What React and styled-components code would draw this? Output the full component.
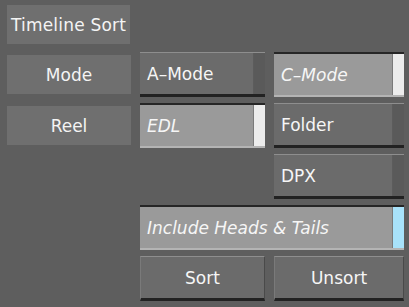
import styled, { createGlobalStyle } from "styled-components";

const GlobalStyle = createGlobalStyle`
  html, body {
    margin: 0;
    padding: 0;
    background: #5e5e5e;
  }
  body {
    width: 409px;
    height: 307px;
    overflow: hidden;
    font-family: "DejaVu Sans", "Liberation Sans", sans-serif;
  }
`;

const Panel = styled.div`
  padding: 5px 0 0 7px;
  display: flex;
  flex-direction: column;
  gap: 8px;
`;

const Title = styled.div`
  width: 123px;
  height: 39px;
  background: #6f6f6f;
  color: #f4f4f4;
  font-size: 17px;
  letter-spacing: 0.2px;
  display: flex;
  align-items: center;
  justify-content: center;
`;

const Grid = styled.div`
  display: grid;
  grid-template-columns: 124px 125px 130px;
  grid-auto-rows: 45px;
  column-gap: 9px;
  row-gap: 6px;
`;

const Label = styled.div`
  grid-column: 1;
  grid-row: ${(p) => p.$row};
  align-self: center;
  height: 39px;
  background: #6f6f6f;
  color: #f4f4f4;
  font-size: 17px;
  display: flex;
  align-items: center;
  justify-content: center;
`;

const Toggle = styled.div`
  grid-column: ${(p) => p.$col} / span ${(p) => p.$span || 1};
  grid-row: ${(p) => p.$row};
  display: flex;
  box-sizing: border-box;
  border-top: ${(p) => (p.$on ? "2px solid #262626" : "1px solid #8e8e8e")};
  border-bottom: ${(p) => (p.$on ? "2px solid #b4b4b4" : "3px solid #222")};
  background: ${(p) => (p.$on ? "#9a9a9a" : "#6b6b6b")};
  color: #f6f6f6;
  font-size: 17px;
  font-style: ${(p) => (p.$on ? "italic" : "normal")};
`;

const ToggleText = styled.div`
  flex: 1;
  display: flex;
  align-items: center;
  padding-left: 7px;
  white-space: nowrap;
`;

const Strip = styled.div`
  width: 11px;
  background: ${(p) => p.$color};
  border-left: 1px solid ${(p) => (p.$on ? "#7a7a7a" : "#5c5c5c")};
`;

const Action = styled.div`
  grid-row: 5;
  grid-column: ${(p) => p.$col};
  box-sizing: border-box;
  border-top: 1px solid #8e8e8e;
  border-left: 1px solid #7a7a7a;
  border-right: 1px solid #4a4a4a;
  border-bottom: 3px solid #222;
  background: #6b6b6b;
  color: #f6f6f6;
  font-size: 17px;
  display: flex;
  align-items: center;
  justify-content: center;
`;

function ToggleButton({ col, row, span, on, strip, children }) {
  const color = strip || (on ? "#ececec" : "#5a5a5a");
  return (
    <Toggle $col={col} $row={row} $span={span} $on={on}>
      <ToggleText>{children}</ToggleText>
      <Strip $color={color} $on={on} />
    </Toggle>
  );
}

export default function App() {
  return (
    <>
      <GlobalStyle />
      <Panel>
        <Title>Timeline Sort</Title>
        <Grid>
          <Label $row={1}>Mode</Label>
          <Label $row={2}>Reel</Label>
          <ToggleButton col={2} row={1}>A–Mode</ToggleButton>
          <ToggleButton col={3} row={1} on>C–Mode</ToggleButton>
          <ToggleButton col={2} row={2} on>EDL</ToggleButton>
          <ToggleButton col={3} row={2}>Folder</ToggleButton>
          <ToggleButton col={3} row={3}>DPX</ToggleButton>
          <ToggleButton col={2} row={4} span={2} on strip="#a8e2fa">
            Include Heads &amp; Tails
          </ToggleButton>
          <Action $col={2}>Sort</Action>
          <Action $col={3}>Unsort</Action>
        </Grid>
      </Panel>
    </>
  );
}
